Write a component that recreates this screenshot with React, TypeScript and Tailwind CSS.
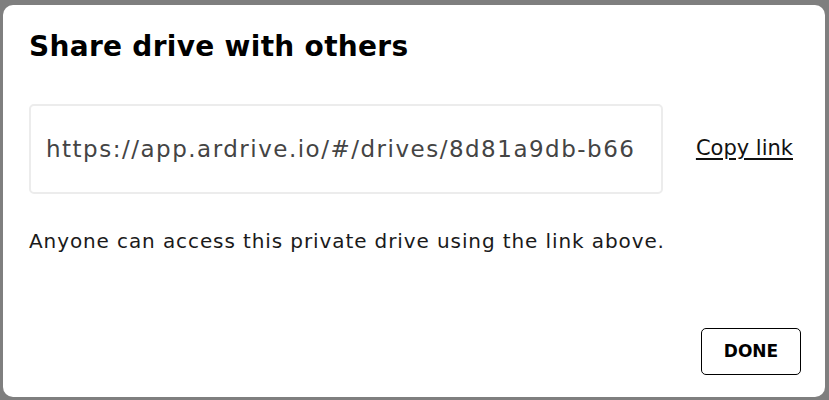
export default function App() {
  return (
    <div className="w-[829px] h-[400px] bg-[#7f7f7f] pt-[5px] pl-[3px] pr-[4px] pb-[3px] font-['DejaVu_Sans',sans-serif]">
      <div className="h-full bg-white rounded-[10px] flex flex-col pl-[26px] pr-[32px] pt-[24px] pb-[22px]">
        <h1 className="text-[28px] leading-[36px] font-bold text-black tracking-[0.3px]">Share drive with others</h1>

        <div className="flex items-center mt-[39px]">
          <div className="w-[634px] h-[90px] border-2 border-[#ececec] rounded-[5px] flex items-center pl-[15px] pr-[27px]">
            <span className="flex-1 text-[23px] text-[#444] whitespace-nowrap overflow-hidden tracking-[1.5px]">
              https://app.ardrive.io/#/drives/8d81a9db-b66c
            </span>
          </div>
          <button className="ml-auto text-[21px] text-[#111] underline underline-offset-[3px]">Copy link</button>
        </div>

        <p className="mt-[32px] text-[20px] text-[#1a1a1a] tracking-[0.9px]">
          Anyone can access this private drive using the link above.
        </p>

        <div className="mt-auto flex justify-end">
          <button className="w-[100px] h-[47px] border-[1.5px] border-black rounded-[5px] text-[17px] font-bold text-black mr-[-8px]">
            DONE
          </button>
        </div>
      </div>
    </div>
  );
}
